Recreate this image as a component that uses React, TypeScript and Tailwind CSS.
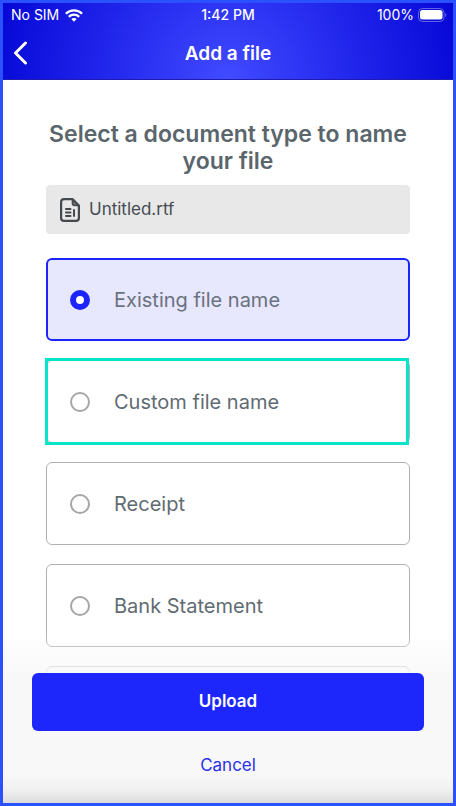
import React, { useState } from 'react';

const documentTypes = [
    { id: 'existing', label: 'Existing file name' },
    { id: 'custom', label: 'Custom file name', highlighted: true },
    { id: 'receipt', label: 'Receipt' },
    { id: 'bank', label: 'Bank Statement' },
    { id: 'other', label: '' },
];

function StatusBar() {
    return (
        <div className="grid h-6 grid-cols-3 items-center text-sm text-white">
            <div className="flex items-center gap-1.5 pl-2">
                <span>No SIM</span>
                <svg viewBox="0 0 18 13" className="h-[13px] w-[18px]" fill="none" stroke="currentColor" strokeWidth="2.3">
                    <path d="M0.9 4.7C5.4 0.3 12.6 0.3 17.1 4.7" />
                    <path d="M3.8 7.8C6.7 5 11.3 5 14.2 7.8" />
                    <path d="M9 12.8L6.3 10.1C7.8 8.7 10.2 8.7 11.7 10.1Z" fill="currentColor" stroke="none" />
                </svg>
            </div>
            <span className="text-center font-medium">1:42 PM</span>
            <div className="flex items-center justify-end gap-1 pr-1.5">
                <span>100%</span>
                <svg viewBox="0 0 29 14" className="h-3.5 w-[29px]" fill="none">
                    <rect x="0.5" y="0.5" width="25.5" height="13" rx="4" stroke="white" strokeOpacity="0.35" />
                    <rect x="2" y="2" width="22.5" height="9.5" rx="2.5" fill="white" />
                    <path d="M27.5 5C28.7 5.5 28.7 8.5 27.5 9Z" fill="white" fillOpacity="0.5" />
                </svg>
            </div>
        </div>
    );
}

function FileIcon() {
    return (
        <svg viewBox="0 0 20 24" className="h-6 w-5" fill="none" stroke="#45484d" strokeWidth="2.2" strokeLinejoin="round" strokeLinecap="round">
            <path d="M12.5 1.1H4C2.3 1.1 1.1 2.3 1.1 4V20C1.1 21.7 2.3 22.9 4 22.9H16C17.7 22.9 18.9 21.7 18.9 20V7.5Z" />
            <path d="M12.5 1.5V5.5C12.5 6.8 13.2 7.5 14.5 7.5H18.5Z" fill="#77797e" strokeWidth="1.6" />
            <path d="M6 11H10.5M6 14.5H10.5M6 18H10.5M14 12V18" strokeWidth="2" />
        </svg>
    );
}

export default function App() {
    const [selected, setSelected] = useState('existing');

    return (
        <div className="flex h-screen flex-col border-3 border-[#2b50fd] bg-white font-['Inter','Liberation_Sans',sans-serif]">
            {/* Header */}
            <header className="shrink-0 border-b border-[#1c1fae] bg-[radial-gradient(circle_farthest-corner_at_50%_100%,#414bff_0%,#262bef_45%,#0607d6_100%)]">
                <StatusBar />
                <div className="grid h-13 grid-cols-[1fr_auto_1fr] items-center text-white">
                    <button type="button" aria-label="Back" className="w-fit p-2.5">
                        <svg viewBox="0 0 15 24" className="h-6 w-[15px]" fill="none" stroke="currentColor" strokeWidth="3" strokeLinecap="round" strokeLinejoin="round">
                            <path d="M12.5 2L2.5 12L12.5 22" />
                        </svg>
                    </button>
                    <h1 className="pt-0.5 text-[19px] font-semibold">Add a file</h1>
                </div>
            </header>

            {/* Document type list */}
            <main className="min-h-0 flex-1 overflow-y-auto px-[43px] pt-[41px] [scrollbar-width:none]">
                <h2 className="text-center text-[23px] leading-[27px] font-semibold text-[#5b666c]">
                    Select a document type to name your file
                </h2>
                <div className="mt-2.5 flex h-[49px] items-center gap-[9px] rounded-sm bg-[#e8e8e8] px-3.5 text-[17px] text-[#454b52]">
                    <FileIcon />
                    <span>Untitled.rtf</span>
                </div>

                <div role="radiogroup" aria-label="Document type" className="mt-6 flex flex-col gap-[19px]">
                    {documentTypes.map((type) => (
                        <label
                            key={type.id}
                            className="relative flex h-[83px] shrink-0 items-center rounded-md border border-[#b1b1b1] bg-white px-[23px] text-xl text-[#5f6b72] has-checked:border-2 has-checked:border-[#1b24fb] has-checked:bg-[#e7e7fd] has-checked:px-[22px] has-checked:text-[#6a7280]"
                        >
                            <input
                                type="radio"
                                name="document-type"
                                aria-label={type.label || 'Other'}
                                checked={selected === type.id}
                                onChange={() => setSelected(type.id)}
                                className="mr-6 size-5 shrink-0 appearance-none rounded-full border-2 border-[#a6a6a6] bg-white checked:border-[6px] checked:border-[#1b24fb]"
                            />
                            {type.label}
                            {type.highlighted && (
                                <span className="pointer-events-none absolute -top-[3px] right-0 -bottom-[3px] -left-0.5 border-3 border-[#08e5c8]" />
                            )}
                        </label>
                    ))}
                </div>
            </main>

            {/* Actions */}
            <footer className="relative flex shrink-0 flex-col items-center bg-[linear-gradient(to_bottom,#f8f8f8_78%,#f0f0f0_90%,#dcdcdc_100%)] px-[29px] pb-[23px]">
                <div className="pointer-events-none absolute inset-x-0 bottom-full h-10 bg-linear-to-b from-white/0 to-[#f8f8f8]/80" />
                <button type="button" className="h-[58px] w-full rounded-md bg-[#1d27fc] text-[17px] font-semibold text-white">
                    Upload
                </button>
                <button type="button" className="mt-[21px] h-7 px-4 text-[17px] text-[#2a30e8]">
                    Cancel
                </button>
            </footer>
        </div>
    );
}
